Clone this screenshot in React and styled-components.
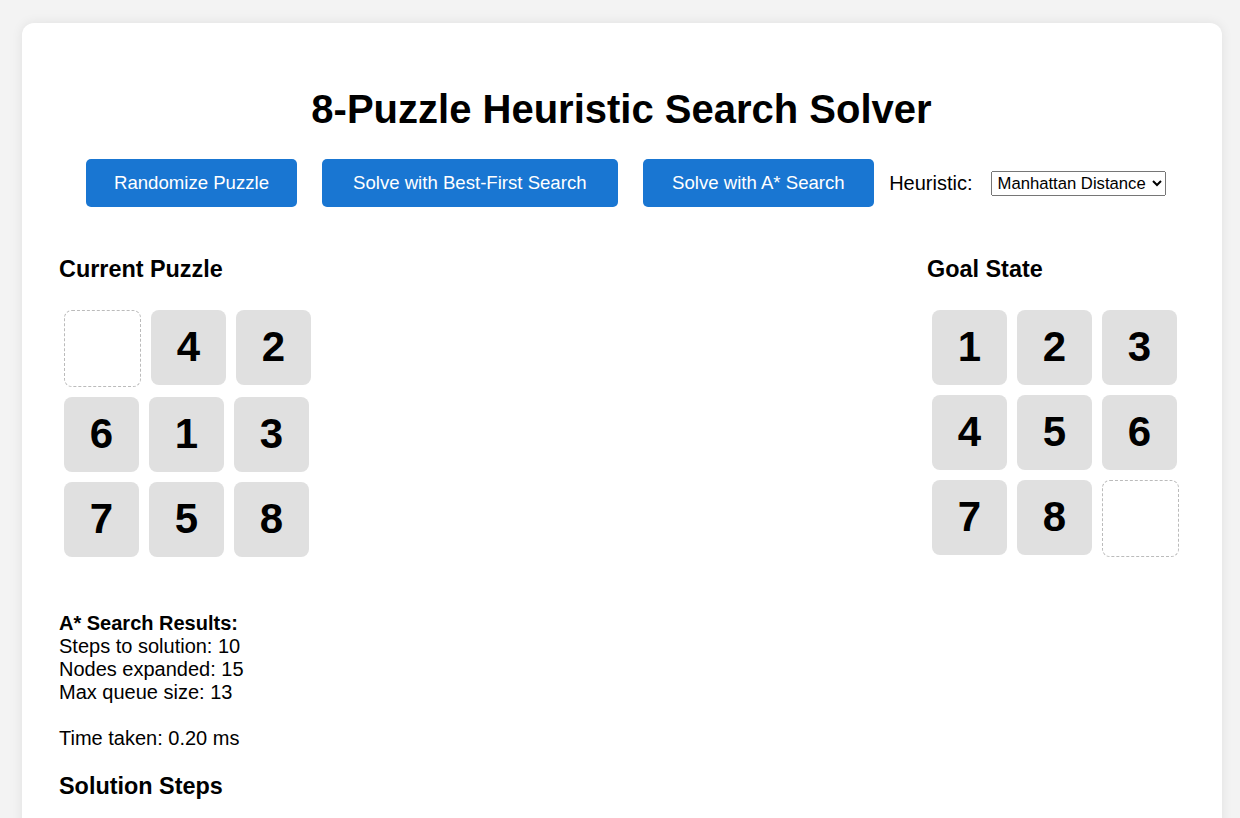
import styled, { createGlobalStyle } from "styled-components";

const GlobalStyle = createGlobalStyle`
  body {
    margin: 0;
    background-color: #f3f3f3;
    font-family: "Liberation Sans", Arial, sans-serif;
    font-size: 20px;
    color: #000;
  }
`;

const Container = styled.div`
  box-sizing: border-box;
  width: 1200px;
  margin: 23px 0 23px 22px;
  padding: 37.5px 38px 37.5px 37px;
  background-color: #fff;
  border-radius: 12px;
  box-shadow: 0 0 12px rgba(0, 0, 0, 0.08);
`;

const Title = styled.h1`
  font-size: 40px;
  text-align: center;
  margin: 26.8px 0;
`;

const Controls = styled.div`
  display: flex;
  align-items: center;
  justify-content: center;
  margin-bottom: 25px;
`;

const Button = styled.button`
  font-family: inherit;
  font-size: 18.6px;
  color: #fff;
  background-color: #1976d2;
  border: none;
  border-radius: 5px;
  padding: 13px ${(p) => p.$pad || "29px"};
  margin: 0 12.5px;
  cursor: pointer;
`;

const Label = styled.label`
  margin: 0 18px 0 3px;
`;

const Select = styled.select`
  font-family: inherit;
  font-size: 16.67px;
  padding: 1px 2px;
  margin-right: 3.5px;
`;

const Boards = styled.div`
  display: flex;
  justify-content: space-between;
  align-items: flex-start;
`;

const Panel = styled.div``;

const Heading = styled.h3`
  font-size: 23.4px;
  margin: ${(p) => (p.$tight ? "22.4px" : "24.4px")} 0 21.4px;
`;

const Grid = styled.div`
  display: flex;
  flex-direction: column;
`;

const Row = styled.div`
  display: flex;
  align-items: flex-start;
`;

const Tile = styled.div`
  width: 75px;
  height: 75px;
  margin: 5px;
  display: flex;
  align-items: center;
  justify-content: center;
  font-size: 42px;
  font-weight: bold;
  border-radius: 8px;
  background-color: ${(p) => (p.$empty ? "#fff" : "#e0e0e0")};
  border: ${(p) => (p.$empty ? "1px dashed #bbb" : "none")};
`;

const Results = styled.div`
  margin-top: 50.5px;
  line-height: 23px;
`;

const ResultTitle = styled.div`
  font-weight: bold;
`;

const Line = styled.div`
  margin-top: ${(p) => (p.$gap ? "23px" : "0")};
`;

const current = [
  [0, 4, 2],
  [6, 1, 3],
  [7, 5, 8],
];

const goal = [
  [1, 2, 3],
  [4, 5, 6],
  [7, 8, 0],
];

function Board({ tiles }) {
  return (
    <Grid>
      {tiles.map((row, i) => (
        <Row key={i}>
          {row.map((n, j) => (
            <Tile key={j} $empty={n === 0}>
              {n === 0 ? "" : n}
            </Tile>
          ))}
        </Row>
      ))}
    </Grid>
  );
}

export default function App() {
  return (
    <>
      <GlobalStyle />
      <Container>
        <Title>8-Puzzle Heuristic Search Solver</Title>
        <Controls>
          <Button $pad="27.5px">Randomize Puzzle</Button>
          <Button $pad="31.5px">Solve with Best-First Search</Button>
          <Button>Solve with A* Search</Button>
          <Label htmlFor="heuristic">Heuristic:</Label>
          <Select id="heuristic" defaultValue="manhattan">
            <option value="manhattan">Manhattan Distance</option>
            <option value="misplaced">Misplaced Tiles</option>
          </Select>
        </Controls>
        <Boards>
          <Panel>
            <Heading>Current Puzzle</Heading>
            <Board tiles={current} />
          </Panel>
          <Panel>
            <Heading>Goal State</Heading>
            <Board tiles={goal} />
          </Panel>
        </Boards>
        <Results>
          <ResultTitle>A* Search Results:</ResultTitle>
          <Line>Steps to solution: 10</Line>
          <Line>Nodes expanded: 15</Line>
          <Line>Max queue size: 13</Line>
          <Line $gap>Time taken: 0.20 ms</Line>
        </Results>
        <Heading $tight>Solution Steps</Heading>
      </Container>
    </>
  );
}
